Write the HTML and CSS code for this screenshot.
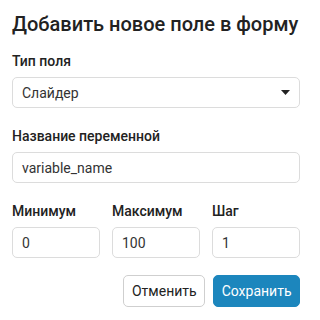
FILE: index.html
```html
<!DOCTYPE html>
<html lang="ru">
<head>
<meta charset="utf-8">
<title>Добавить новое поле в форму</title>
<link rel="stylesheet" href="styles.css">
</head>
<body>
<div class="dialog">
  <h2 class="title">Добавить новое поле в форму</h2>
  <div class="field">
    <label class="label">Тип поля</label>
    <div class="box select">
      <span>Слайдер</span>
      <svg class="caret" width="9" height="5" viewBox="0 0 9 5"><path d="M0 0H9L4.5 5Z" fill="#222"/></svg>
    </div>
  </div>
  <div class="field">
    <label class="label">Название переменной</label>
    <div class="box">variable_name</div>
  </div>
  <div class="grid">
    <div class="col">
      <label class="label">Минимум</label>
      <div class="box">0</div>
    </div>
    <div class="col">
      <label class="label">Максимум</label>
      <div class="box">100</div>
    </div>
    <div class="col">
      <label class="label">Шаг</label>
      <div class="box">1</div>
    </div>
  </div>
  <div class="actions">
    <button class="btn btn-cancel">Отменить</button>
    <button class="btn btn-save">Сохранить</button>
  </div>
</div>
</body>
</html>
```
FILE: styles.css
```css
html, body {
  margin: 0;
  padding: 0;
  background: #fff;
}
body {
  font-family: Roboto, "Noto Sans", sans-serif;
  color: #222;
}
.dialog {
  box-sizing: border-box;
  width: 312px;
  padding: 12px;
}
.title {
  margin: 0 0 17px;
  font-size: 20px;
  line-height: 24px;
  font-weight: 500;
  color: #222;
  white-space: nowrap;
}
.field {
  margin-bottom: 20px;
}
.label {
  display: block;
  font-size: 14px;
  line-height: 16px;
  font-weight: 500;
  color: #222;
  margin-bottom: 8px;
}
.box {
  box-sizing: border-box;
  height: 31px;
  border: 1px solid #dcdcdc;
  border-radius: 5px;
  padding: 0 9px;
  display: flex;
  align-items: center;
  font-size: 14px;
  color: #333;
}
.select {
  justify-content: space-between;
}
.caret {
  display: block;
}
.grid {
  display: grid;
  grid-template-columns: 1fr 1fr 1fr;
  column-gap: 12px;
}
.actions {
  display: flex;
  justify-content: flex-end;
  gap: 8px;
  margin-top: 17px;
}
.btn {
  height: 32px;
  border-radius: 5px;
  font-family: Roboto, "Noto Sans", sans-serif;
  font-size: 14px;
  padding: 0 7.5px;
  cursor: pointer;
}
.btn-cancel {
  background: #fff;
  border: 1px solid #cfcfcf;
  color: #222;
}
.btn-save {
  background: #1c86bd;
  border: 1px solid #1c86bd;
  color: #fff;
}
```
